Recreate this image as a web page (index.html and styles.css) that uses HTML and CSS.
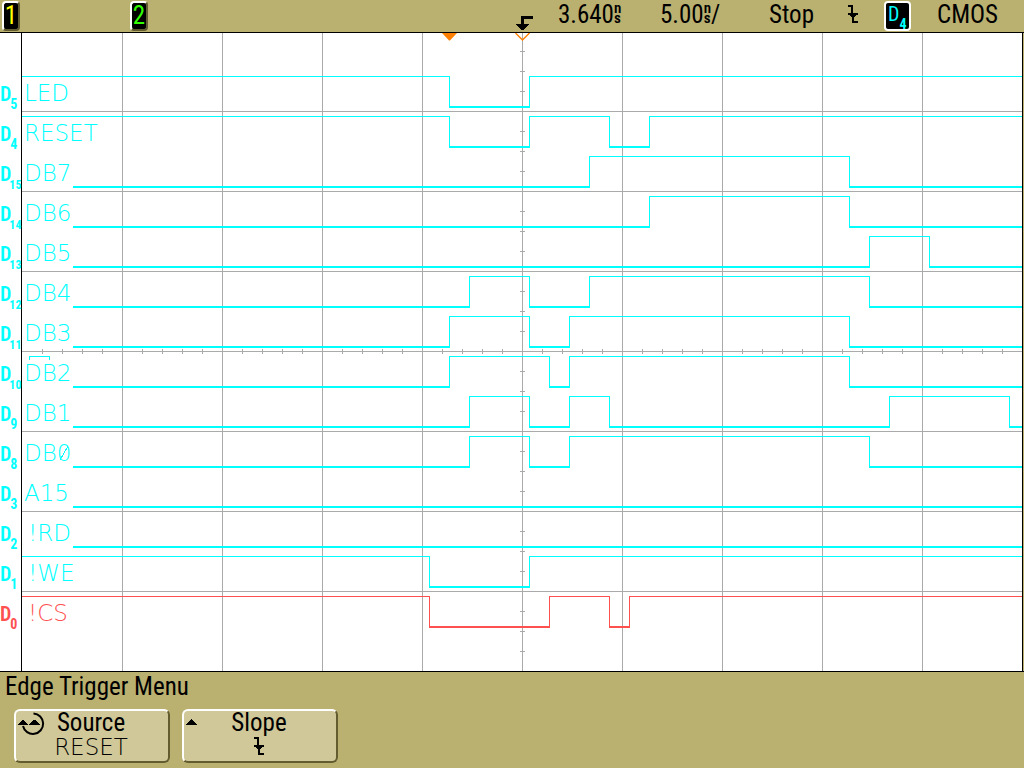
FILE: index.html
```html
<!DOCTYPE html>
<html lang="en">
<head>
<meta charset="utf-8">
<meta name="viewport" content="width=device-width, initial-scale=1">
<title>Oscilloscope</title>
<link rel="stylesheet" href="styles.css">
</head>
<body>
<svg class="defs" width="0" height="0" aria-hidden="true">
  <symbol id="falling" viewBox="0 0 12 18">
    <path d="M1 0H6V8H11V10H9V11H8V12H7V16H11V18H5V12H4V11H3V10H1V8H4V2H1Z" fill="currentColor"/>
  </symbol>
</svg>

<header class="status">
  <div><button class="channel channel-1" type="button">1</button></div>
  <div><button class="channel channel-2" type="button">2</button></div>
  <svg class="trigger-point" width="20" height="16" viewBox="0 0 20 16" role="img" aria-label="Trigger point">
    <path d="M7 0H19V3H10V8H15V9H14V10H13V11H12V12H11V13H10V14H7V13H6V12H5V11H4V10H3V9H2V8H7Z"/>
  </svg>
  <div class="reading">3.640<span class="unit"><span>n</span><span>s</span></span></div>
  <div class="reading">5.00<span class="unit"><span>n</span><span>s</span></span>/</div>
  <div class="reading">Stop</div>
  <svg class="slope" width="12" height="18" role="img" aria-label="Falling edge"><use href="#falling"/></svg>
  <div class="source">D<sub>4</sub></div>
  <div class="reading">CMOS</div>
</header>

<main class="scope">
  <div class="screen">
    <svg class="graticule" viewBox="0 0 1000 638" preserveAspectRatio="none" aria-hidden="true">
      <path class="grid" d="M100.5 0V638M200.5 0V638M300.5 0V638M400.5 0V638M500.5 0V638M600.5 0V638M700.5 0V638M800.5 0V638M900.5 0V638"/>
      <path class="grid" d="M0 78.5H1000M0 158.5H1000M0 238.5H1000M0 318.5H1000M0 398.5H1000M0 478.5H1000M0 558.5H1000"/>
      <path class="ticks" d="M20 318.5H1000"/>
      <path class="ticks" d="M500.5 18V638"/>
    </svg>
    <svg class="marker marker-reference" width="15" height="8" viewBox="0 0 15 8" aria-hidden="true"><path d="M0 0H15L8 7.5H7Z" fill="#ff8000"/></svg>
    <svg class="marker marker-trigger" width="15" height="8" viewBox="0 0 15 8" aria-hidden="true"><path d="M.5 0L7.5 7L14.5 0" fill="none" stroke="#ff8000" stroke-width="1.4"/></svg>
  </div>

  <div class="channels">
    <div class="row">
      <div class="id">D<sub>5</sub></div>
      <div class="lane"><svg class="trace" viewBox="0 0 1000 40" preserveAspectRatio="none"><path d="M0 3.5H427.5V34M507.5 34V3.5H1000"/><path class="low" d="M427 34H508"/></svg><span class="name">LED</span></div>
    </div>
    <div class="row">
      <div class="id">D<sub>4</sub></div>
      <div class="lane"><svg class="trace" viewBox="0 0 1000 40" preserveAspectRatio="none"><path d="M0 3.5H427.5V34M507.5 34V3.5H587.5V34M627.5 34V3.5H1000"/><path class="low" d="M427 34H508M587 34H628"/></svg><span class="name">RESET</span></div>
    </div>
    <div class="row">
      <div class="id">D<sub class="pair">15</sub></div>
      <div class="lane"><svg class="trace" viewBox="0 0 1000 40" preserveAspectRatio="none"><path d="M567.5 34V3.5H827.5V34"/><path class="low" d="M51 34H568M827 34H1000"/></svg><span class="name">DB7</span></div>
    </div>
    <div class="row">
      <div class="id">D<sub class="pair">14</sub></div>
      <div class="lane"><svg class="trace" viewBox="0 0 1000 40" preserveAspectRatio="none"><path d="M627.5 34V3.5H827.5V34"/><path class="low" d="M51 34H628M827 34H1000"/></svg><span class="name">DB6</span></div>
    </div>
    <div class="row">
      <div class="id">D<sub class="pair">13</sub></div>
      <div class="lane"><svg class="trace" viewBox="0 0 1000 40" preserveAspectRatio="none"><path d="M847.5 34V3.5H907.5V34"/><path class="low" d="M51 34H848M907 34H1000"/></svg><span class="name">DB5</span></div>
    </div>
    <div class="row">
      <div class="id">D<sub class="pair">12</sub></div>
      <div class="lane"><svg class="trace" viewBox="0 0 1000 40" preserveAspectRatio="none"><path d="M447.5 34V3.5H507.5V34M567.5 34V3.5H847.5V34"/><path class="low" d="M51 34H448M507 34H568M847 34H1000"/></svg><span class="name">DB4</span></div>
    </div>
    <div class="row">
      <div class="id">D<sub class="pair">11</sub></div>
      <div class="lane"><svg class="trace" viewBox="0 0 1000 40" preserveAspectRatio="none"><path d="M427.5 34V3.5H507.5V34M547.5 34V3.5H827.5V34"/><path class="low" d="M51 34H428M507 34H548M827 34H1000"/></svg><span class="name">DB3</span></div>
    </div>
    <div class="row">
      <div class="id">D<sub class="pair">10</sub></div>
      <div class="lane"><svg class="trace" viewBox="0 0 1000 40" preserveAspectRatio="none"><path d="M7.5 7V3.5H27.5V7M427.5 34V3.5H527.5V34M547.5 34V3.5H827.5V34"/><path class="low" d="M51 34H428M527 34H548M827 34H1000"/></svg><span class="name">DB2</span></div>
    </div>
    <div class="row">
      <div class="id">D<sub>9</sub></div>
      <div class="lane"><svg class="trace" viewBox="0 0 1000 40" preserveAspectRatio="none"><path d="M447.5 34V3.5H507.5V34M547.5 34V3.5H587.5V34M867.5 34V3.5H987.5V34"/><path class="low" d="M51 34H448M507 34H548M587 34H868M987 34H1000"/></svg><span class="name">DB1</span></div>
    </div>
    <div class="row">
      <div class="id">D<sub>8</sub></div>
      <div class="lane"><svg class="trace" viewBox="0 0 1000 40" preserveAspectRatio="none"><path d="M447.5 34V3.5H507.5V34M547.5 34V3.5H847.5V34"/><path class="low" d="M51 34H448M507 34H548M847 34H1000"/></svg><span class="name">DB<span class="zero">0</span></span></div>
    </div>
    <div class="row">
      <div class="id">D<sub>3</sub></div>
      <div class="lane"><svg class="trace" viewBox="0 0 1000 40" preserveAspectRatio="none"><path class="low" d="M51 34H1000"/></svg><span class="name">A15</span></div>
    </div>
    <div class="row">
      <div class="id">D<sub>2</sub></div>
      <div class="lane"><svg class="trace" viewBox="0 0 1000 40" preserveAspectRatio="none"><path class="low" d="M51 34H1000"/></svg><span class="name inverted">!RD</span></div>
    </div>
    <div class="row">
      <div class="id">D<sub>1</sub></div>
      <div class="lane"><svg class="trace" viewBox="0 0 1000 40" preserveAspectRatio="none"><path d="M0 3.5H407.5V34M507.5 34V3.5H1000"/><path class="low" d="M407 34H508"/></svg><span class="name inverted">!WE</span></div>
    </div>
    <div class="row selected">
      <div class="id">D<sub>0</sub></div>
      <div class="lane"><svg class="trace" viewBox="0 0 1000 40" preserveAspectRatio="none"><path d="M0 3.5H407.5V34M527.5 34V3.5H587.5V34M607.5 34V3.5H1000"/><path class="low" d="M407 34H528M587 34H608"/></svg><span class="name inverted">!CS</span></div>
    </div>
  </div>
</main>

<footer class="menu">
  <h1>Edge Trigger Menu</h1>
  <div class="softkeys">
    <button class="softkey" type="button">
      <svg class="softkey-icon" width="27" height="24" viewBox="0 0 27 24" aria-hidden="true">
        <path d="M15.5 1.5A10.2 10.2 0 1 1 5 14" fill="none" stroke="#000" stroke-width="2"/>
        <path d="M0 13H10V12H9V11H8V10H7V9H6V8H4V9H3V10H2V11H1V12H0ZM11 13H22V12H21V11H20V10H19V9H18V8H15V9H14V10H13V11H12V12H11Z"/>
      </svg>
      <span class="softkey-title">Source</span>
      <span class="softkey-value">RESET</span>
    </button>
    <button class="softkey" type="button">
      <svg class="softkey-icon" width="27" height="24" viewBox="0 0 27 24" aria-hidden="true">
        <path d="M0 13H11V12H10V11H9V10H8V9H7V8H6V7H5V8H4V9H3V10H2V11H1V12H0Z"/>
      </svg>
      <span class="softkey-title">Slope</span>
      <svg class="softkey-slope" width="12" height="18" role="img" aria-label="Falling edge"><use href="#falling"/></svg>
    </button>
  </div>
</footer>
</body>
</html>
```
FILE: styles.css
```css
* {
  box-sizing: border-box;
}

body {
  margin: 0;
  min-height: 100vh;
  background: #bab070;
  color: #000;
  font: 25px/32px "Roboto Condensed", Roboto, sans-serif;
}

.defs {
  position: absolute;
}

button {
  margin: 0;
  padding: 0;
  color: inherit;
  font: inherit;
}

svg {
  display: block;
}

/* Status bar */

.status {
  display: grid;
  grid-template-columns:
    minmax(0, 128fr) minmax(0, 384fr) minmax(0, 44fr) minmax(0, 102fr)
    minmax(0, 109fr) minmax(0, 78fr) minmax(0, 37fr) minmax(0, 53fr) minmax(0, 87fr);
  height: 32px;
  padding-left: 2px;
  white-space: nowrap;
}

.channel {
  display: block;
  width: 18px;
  height: 30px;
  margin-top: 1px;
  border: 2px solid;
  border-color: #fff #5f5a30 #5f5a30 #fff;
  border-radius: 4px;
  background: #000;
  line-height: 24px;
}

.channel-1 {
  color: #ff0;
}

.channel-2 {
  color: #3f0;
}

.reading {
  display: flex;
  line-height: 30px;
}

.trigger-point {
  align-self: end;
}

.unit {
  display: flex;
  flex-direction: column;
  padding-top: 3px;
  font-size: 15px;
  font-weight: 600;
  line-height: 10px;
}

.slope {
  margin-top: 5px;
}

.source {
  width: 27px;
  height: 30px;
  margin-top: 1px;
  padding-left: 2px;
  border: 2px solid #fff;
  border-radius: 4px;
  background: #000;
  color: #0ff;
  font-size: 20px;
  line-height: 22px;
}

sub {
  font-size: 14px;
  font-weight: 700;
  line-height: 0;
  vertical-align: -8px;
}

/* Display */

.scope {
  position: relative;
  padding-right: 1px;
  border-top: 1px solid #000;
  border-bottom: 1px solid #000;
  background: linear-gradient(to left, #bab070 1px, #fff 1px);
}

.screen {
  position: absolute;
  inset: 0 1px 0 21px;
  border: solid #000;
  border-width: 0 1px;
}

.graticule {
  width: 100%;
  height: 100%;
}

.graticule path,
.trace path {
  fill: none;
  shape-rendering: crispEdges;
  vector-effect: non-scaling-stroke;
}

.grid {
  stroke: #aaa;
}

.ticks {
  stroke: #aaa;
  stroke-width: 5px;
  stroke-dasharray: 1 19;
}

.marker {
  position: absolute;
  top: 0;
  margin-left: -8px;
}

.marker-reference {
  left: 42.8%;
}

.marker-trigger {
  left: 50.1%;
}

.channels {
  position: relative;
  padding: 40px 1px 38px 0;
}

.row {
  display: grid;
  grid-template-columns: 22px minmax(0, 1fr);
  height: 40px;
  color: #0ff;
}

.selected {
  color: #ff5050;
}

.id {
  white-space: nowrap;
  font-size: 20px;
  font-weight: 600;
  line-height: 42px;
}

.id sub {
  margin-left: -1px;
}

.id .pair {
  margin-left: -2px;
  font-size: 12px;
}

.lane {
  display: grid;
}

.lane > * {
  grid-area: 1 / 1;
}

.trace {
  width: 100%;
  height: 40px;
}

.trace path {
  stroke: currentColor;
}

.trace .low {
  stroke-width: 2px;
}

.name,
.softkey-value {
  font-family: "DejaVu Sans Light", "DejaVu Sans", sans-serif;
  font-size: 23px;
  font-weight: 200;
}

.name {
  padding-left: 2px;
  line-height: 40px;
}

.inverted {
  padding-left: 6px;
}

.zero {
  background: linear-gradient(to top left, transparent 46%, currentColor 46% 54%, transparent 54%) center / 8px 14px no-repeat;
}

/* Softkey menu */

.menu {
  padding: 0 5px;
}

.menu h1 {
  margin: 0;
  font-size: 25px;
  font-weight: 400;
  line-height: 30px;
}

.softkeys {
  display: flex;
  gap: 12px;
  padding: 7px 9px 5px;
}

.softkey {
  position: relative;
  display: flex;
  flex-direction: column;
  align-items: center;
  width: 156px;
  height: 54px;
  padding-right: 2px;
  border: 2px solid;
  border-color: #fff #625c30 #625c30 #fff;
  border-radius: 6px;
  background: #d0c898;
  line-height: 24px;
}

.softkey-icon {
  position: absolute;
  top: 1px;
  left: 2px;
}

.softkey-slope {
  margin-top: 2px;
}
```
